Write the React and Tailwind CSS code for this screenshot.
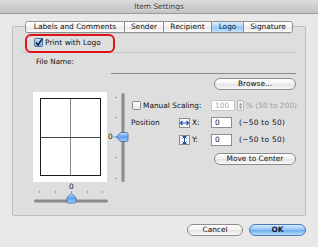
import React from 'react';

const font = "font-['Lucida_Grande','DejaVu_Sans',sans-serif]";

const AquaButton = ({ children, className = '', blue = false }) => (
  <div
    className={`flex items-center justify-center whitespace-nowrap rounded-full border text-[7.4px] leading-none ${
      blue
        ? 'border-[#4d79b8] bg-[linear-gradient(#d6ebff,#8cc2f5_50%,#6aaaf0_51%,#b9defe)] font-bold text-[#102040]'
        : 'border-[#8c8c8c] bg-[linear-gradient(#ffffff,#f0f0f0_50%,#e2e2e2_51%,#fafafa)] text-[#111]'
    } ${className}`}
  >
    {children}
  </div>
);

const Tab = ({ label, active, first, w }) => (
  <div
    className={`flex h-full items-center justify-center whitespace-nowrap border-[#8f8f8f] text-[7.4px] leading-none ${w} ${
      first ? '' : 'border-l'
    } ${
      active
        ? 'bg-[linear-gradient(#dbeeff,#a9d2f7_50%,#8fc3f2_51%,#c6e4fd)] text-[#0b1f3a]'
        : 'bg-[linear-gradient(#ffffff,#f4f4f4_50%,#e6e6e6_51%,#fbfbfb)] text-[#111]'
    }`}
  >
    {label}
  </div>
);

const CheckBox = ({ checked }) => (
  <svg width="9" height="9" viewBox="0 0 9 9" className="shrink-0">
    <defs>
      <linearGradient id={checked ? 'cbOn' : 'cbOff'} x1="0" y1="0" x2="0" y2="1">
        <stop offset="0" stopColor={checked ? '#c5e0ff' : '#ffffff'} />
        <stop offset="1" stopColor={checked ? '#6ea6e8' : '#e6e6e6'} />
      </linearGradient>
    </defs>
    <rect x="0.5" y="0.5" width="8" height="8" rx="1" fill={`url(#${checked ? 'cbOn' : 'cbOff'})`} stroke={checked ? '#52739f' : '#8a8a8a'} />
    {checked && <path d="M2 4.5 L4 7 L8.5 0.5" fill="none" stroke="#14233d" strokeWidth="1.5" />}
  </svg>
);

const Field = ({ value, disabled, w = 'w-[21px]', h = 'h-[11px]' }) => (
  <div
    className={`flex shrink-0 items-center border bg-white pl-[3px] text-[7.4px] leading-none ${w} ${h} ${
      disabled ? 'border-[#c6c6c6] text-[#a8a8a8]' : 'border-[#8e8e8e] text-[#111]'
    }`}
  >
    {value}
  </div>
);

const Knob = ({ d, id }) => (
  <>
    <defs>
      <linearGradient id={id} x1="0" y1="0" x2="0" y2="1">
        <stop offset="0" stopColor="#bfe0ff" />
        <stop offset="0.5" stopColor="#5fa2ec" />
        <stop offset="1" stopColor="#9fd0ff" />
      </linearGradient>
    </defs>
    <path d={d} fill={`url(#${id})`} stroke="#3c6aa6" strokeWidth="0.8" />
  </>
);

const VerticalSlider = () => (
  <div className="relative h-[90px] w-[22px] shrink-0">
    <svg width="22" height="90" viewBox="0 0 22 90">
      <rect x="14.5" y="1" width="3" height="89" rx="1.5" fill="#8a8a8a" />
      {[5, 25, 65, 86].map((y) => (
        <rect key={y} x="8" y={y} width="2" height="1" fill="#9c9c9c" />
      ))}
      <path d="M6 45 H10" stroke="#9c9c9c" strokeWidth="1" />
      <Knob id="vk" d="M9.5 45 L13.5 40.5 H19.5 Q21 40.5 21 42 V48 Q21 49.5 19.5 49.5 H13.5 Z" />
    </svg>
    <span className="absolute left-[1px] top-[41px] text-[7.4px] leading-none text-[#222]">0</span>
  </div>
);

const HorizontalSlider = () => (
  <div className="relative ml-[21px] mt-[2px] h-[20px] w-[74px]">
    <svg width="74" height="20" viewBox="0 0 74 20">
      {[5, 21, 37, 53, 68].map((x) => (
        <rect key={x} x={x} y="7" width="1" height="2" fill="#9c9c9c" />
      ))}
      <rect x="0" y="15.5" width="74" height="3" rx="1.5" fill="#8a8a8a" />
      <Knob id="hk" d="M37.5 9.5 L42 13.5 V17.5 Q42 19 40.5 19 H34.5 Q33 19 33 17.5 V13.5 Z" />
    </svg>
    <span className="absolute left-[35px] top-[-1px] text-[7.4px] leading-none text-[#222]">0</span>
  </div>
);

const ArrowIcon = ({ vertical }) => (
  <svg width="11" height="10" viewBox="0 0 11 10" className="shrink-0">
    <rect x="0.5" y="0.5" width="10" height="9" fill="#fafafa" stroke="#8a8a8a" />
    {vertical ? (
      <path d="M5.5 1.5 V8.5 M3.5 3.5 L5.5 1.5 L7.5 3.5 M3.5 6.5 L5.5 8.5 L7.5 6.5 M3.5 1.5 H7.5 M3.5 8.5 H7.5" fill="none" stroke="#1f4fa8" strokeWidth="1" />
    ) : (
      <path d="M1.5 5 H9.5 M3.5 3 L1.5 5 L3.5 7 M7.5 3 L9.5 5 L7.5 7" fill="none" stroke="#1f4fa8" strokeWidth="1.2" />
    )}
  </svg>
);

export default function App() {
  return (
    <div className={`flex h-[247px] w-[318px] flex-col overflow-hidden bg-[#e8e8e8] ${font}`}>
      <div className="flex h-[14px] shrink-0 items-center justify-center border-b border-[#9a9a9a] bg-[linear-gradient(#dcdcdc,#c2c2c2)] text-[7.4px] leading-none text-[#303030] [text-shadow:0_1px_0_#eee]">
        Item Settings
      </div>

      <div className="ml-[12px] mt-[12px] flex h-[190px] w-[294px] flex-col rounded-[2px] border border-[#bdbdbd] bg-[#dedede]">
        <div className="mt-[-6px] flex h-[12px] self-center overflow-hidden rounded-[3px] border border-[#8f8f8f] shadow-[0_1px_0_rgba(0,0,0,0.08)]">
          <Tab label="Labels and Comments" first w="w-[98px]" />
          <Tab label="Sender" w="w-[39px]" />
          <Tab label="Recipient" w="w-[48px]" />
          <Tab label="Logo" active w="w-[32px]" />
          <Tab label="Signature" w="w-[49px]" />
        </div>

        <div className="relative ml-[9px] mr-[9px] mt-[1px] h-[19px] border-b border-[#c6c6c6]">
          <div className="absolute left-[3px] top-0 h-[19px] w-[90px] rounded-[6px] border-2 border-[#e2101a]" />
          <div className="flex h-full items-center gap-[2px] pb-[1px] pl-[12px] text-[7.5px] leading-none text-[#111]">
            <CheckBox checked />
            <span className="whitespace-nowrap">Print with Logo</span>
          </div>
        </div>

        <div className="ml-[23px] mt-[3px] h-[11px] text-[7.2px] leading-[11px] text-[#111]">File Name:</div>
        <div className="ml-[98px] mt-[6px] w-[185px] border-t border-[#8a8a8a]" />
        <AquaButton className="mr-[9px] mt-[4px] h-[12px] w-[82px] self-end">Browse...</AquaButton>

        <div className="mt-[2px] flex">
          <div className="flex flex-col">
            <div className="flex">
              <div className="ml-[20px] flex h-[90px] w-[74px] justify-center bg-white pt-[6px]">
                <div className="flex h-[78px] w-[61px] flex-col border-[1.5px] border-[#1a1a1a]">
                  <div className="flex flex-1 border-b border-[#444]">
                    <div className="flex-1 border-r border-[#888]" />
                    <div className="flex-1" />
                  </div>
                  <div className="flex flex-1">
                    <div className="flex-1 border-r border-[#888]" />
                    <div className="flex-1" />
                  </div>
                </div>
              </div>
              <VerticalSlider />
            </div>
            <HorizontalSlider />
          </div>

          <div className="ml-[2px] flex flex-col whitespace-nowrap text-[7.4px] leading-none text-[#111]">
            <div className="mt-[8px] flex h-[11px] items-center">
              <div className="flex w-[80px] items-center gap-[2px] pl-[1px]">
                <CheckBox />
                <span>Manual Scaling:</span>
              </div>
              <Field value="100" disabled w="w-[24px]" />
              <div className="ml-[2px] flex h-[11px] w-[7px] shrink-0 flex-col items-center justify-center rounded-[2px] border border-[#b8b8b8] bg-[#f4f4f4] text-[4px] leading-[4px] text-[#9a9a9a]">
                <span>▲</span>
                <span>▼</span>
              </div>
              <span className="ml-[2px] text-[#a0a0a0]">% (50 to 200)</span>
            </div>

            <div className="mt-[6px] flex h-[11px] items-center">
              <span className="w-[48px]">Position</span>
              <ArrowIcon />
              <span className="ml-[2px] w-[19px]">X:</span>
              <Field value="0" />
              <span className="ml-[7px] tracking-[0.3px]">(−50 to 50)</span>
            </div>

            <div className="mt-[6px] flex h-[12px] items-center">
              <span className="w-[48px]" />
              <ArrowIcon vertical />
              <span className="ml-[2px] w-[19px]">Y:</span>
              <Field value="0" h="h-[12px]" />
              <span className="ml-[7px] tracking-[0.3px]">(−50 to 50)</span>
            </div>

            <AquaButton className="ml-[83px] mt-[7px] h-[12px] w-[82px]">Move to Center</AquaButton>
          </div>
        </div>
      </div>

      <div className="mr-[12px] mt-[8px] flex justify-end gap-[6px]">
        <AquaButton className="h-[12px] w-[56px]">Cancel</AquaButton>
        <AquaButton blue className="h-[12px] w-[57px]">OK</AquaButton>
      </div>
    </div>
  );
}
